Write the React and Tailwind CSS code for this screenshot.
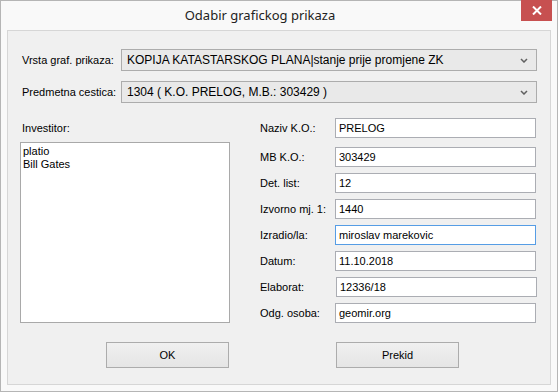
import React from "react";

const fields = [
  { label: "Naziv K.O.:", value: "PRELOG", mt: "mt-0" },
  { label: "MB K.O.:", value: "303429", mt: "mt-[9px]" },
  { label: "Det. list:", value: "12", mt: "mt-[6px]" },
  { label: "Izvorno mj. 1:", value: "1440", mt: "mt-[6px]" },
  { label: "Izradio/la:", value: "miroslav marekovic", mt: "mt-[6px]", focused: true },
  { label: "Datum:", value: "11.10.2018", mt: "mt-[6px]" },
  { label: "Elaborat:", value: "12336/18", mt: "mt-[6px]", shift: true },
  { label: "Odg. osoba:", value: "geomir.org", mt: "mt-[6px]" },
];

const Chevron = () => (
  <svg width="8" height="5" viewBox="0 0 8 5" className="shrink-0">
    <path d="M1 1 L4 4 L7 1" fill="none" stroke="#606060" strokeWidth="1.5" />
  </svg>
);

const Combo = ({ value }) => (
  <div className="flex h-[22px] w-[416px] items-center justify-between border border-[#acacac] bg-[#e9e9e9] pl-[5px] pr-[8px] text-[12px] text-black">
    <span className="truncate">{value}</span>
    <Chevron />
  </div>
);

const App = () => {
  return (
    <div
      className="flex h-[392px] w-[558px] flex-col border border-[#b5b5b5] bg-[#f9f9f9] text-[11px]"
      style={{ fontFamily: '"Liberation Sans", Arial, sans-serif' }}
    >
      {/* title bar */}
      <div className="relative flex h-[29px] items-center justify-center pr-[38px]">
        <span
          className="text-[13px] text-[#222]"
          style={{ fontFamily: '"Noto Sans", "Open Sans", sans-serif' }}
        >
          Odabir grafickog prikaza
        </span>
        <div className="absolute right-[5px] top-[-1px] flex h-[21px] w-[31px] items-center justify-center bg-[#c75050]">
          <svg width="10" height="9" viewBox="0 0 10 9">
            <path d="M1 0.5 L9 8.5 M9 0.5 L1 8.5" stroke="#fff" strokeWidth="2" />
          </svg>
        </div>
      </div>

      {/* client area */}
      <div className="mx-[6px] mb-[6px] flex flex-1 flex-col border border-[#d6d6d6] bg-[#f0f0f0] text-black">
        <div className="mt-[18px] flex items-center">
          <span className="w-[113px] pl-[14px]">Vrsta graf. prikaza:</span>
          <Combo value="KOPIJA KATASTARSKOG PLANA|stanje prije promjene ZK" />
        </div>
        <div className="mt-[10px] flex items-center">
          <span className="w-[113px] pl-[14px]">Predmetna cestica:</span>
          <Combo value="1304 ( K.O. PRELOG, M.B.: 303429 )" />
        </div>

        <div className="mt-[15px] flex">
          <div className="ml-[12px] flex w-[210px] flex-col">
            <span className="mt-[3px] pl-[2px] leading-[14px]">Investitor:</span>
            <div className="mt-[7px] h-[181px] border border-[#a9a9a9] bg-white px-[2px] pt-[2px] leading-[13px]">
              <div>platio</div>
              <div>Bill Gates</div>
            </div>
          </div>

          <div className="ml-[29px] flex flex-col">
            {fields.map((f) => (
              <div key={f.label} className={`flex items-center ${f.mt}`}>
                <span className="w-[76px] pl-[1px]">{f.label}</span>
                <div
                  className={`flex h-[20px] w-[201px] items-center bg-white px-[3px] ${
                    f.focused ? "border border-[#569de5]" : "border border-[#abadb3]"
                  } ${f.shift ? "ml-[1px]" : ""}`}
                >
                  {f.value}
                </div>
              </div>
            ))}
          </div>
        </div>

        <div className="mt-[19px] flex">
          <button className="ml-[98px] h-[26px] w-[123px] border border-[#acacac] bg-gradient-to-b from-[#f0f0f0] to-[#e5e5e5] text-black">
            OK
          </button>
          <button className="ml-[107px] h-[26px] w-[123px] border border-[#acacac] bg-gradient-to-b from-[#f0f0f0] to-[#e5e5e5] text-black">
            Prekid
          </button>
        </div>
      </div>
    </div>
  );
};

export default App;
